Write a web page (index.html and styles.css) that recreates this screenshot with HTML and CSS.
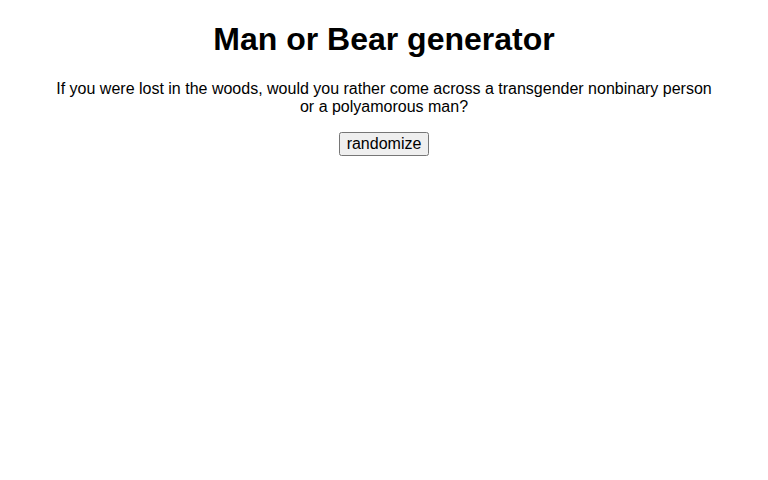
FILE: index.html
```html
<!DOCTYPE html>
<html lang="en">
<head>
  <meta charset="utf-8" />
  <title>Man or Bear generator</title>
  <meta name="viewport" content="width=device-width, initial-scale=1" />
<link rel="stylesheet" href="styles.css">
</head>

<body>
  <div class="page">
    <h1>Man or Bear generator</h1>
    <p id="question">If you were lost in the woods, would you rather come across a transgender nonbinary person or a polyamorous man?</p>
    <button type="button" id="randomize" class="btn">randomize</button>
  </div>
</body>
</html>
```

FILE: styles.css
```css
body {
  margin: 0;
  font-family: "Liberation Sans", Arial, sans-serif;
  text-align: center;
}

h1 {
  font-size: 2em;
}

p {
  max-width: 662px;
  margin: 16px auto;
}

.btn {
  font-family: "Liberation Sans", Arial, sans-serif;
  font-size: 16px;
}
```
